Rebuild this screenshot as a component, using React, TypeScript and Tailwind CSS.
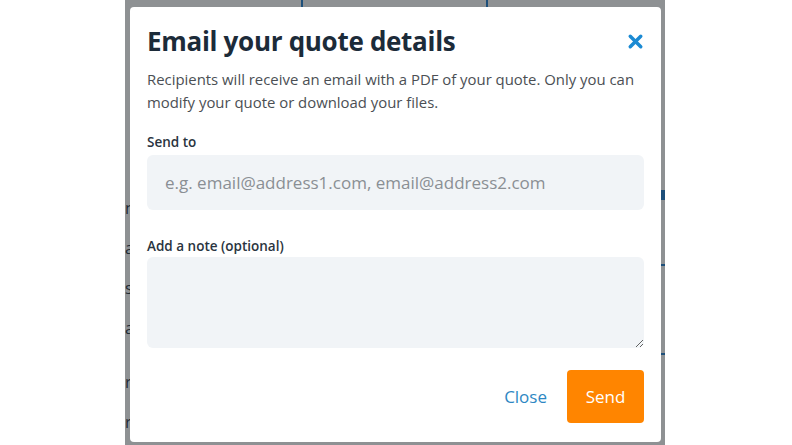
import { X } from 'lucide-react';

export default function App() {
  return (
    <div
      className="relative w-[792px] h-[445px] bg-white overflow-hidden"
      style={{ fontFamily: '"Open Sans", "Noto Sans", sans-serif' }}
    >
      {/* Dimmed page behind the dialog */}
      <div className="absolute left-[125px] top-0 w-[540px] h-[445px] bg-[#8e9193]">
        <div className="absolute left-[176px] top-0 w-[2px] h-[7px] bg-[#1d4f7a]" />
        <div className="absolute left-[361px] top-0 w-[2px] h-[7px] bg-[#1d4f7a]" />
        <div className="absolute left-[0px] top-[198px] flex flex-col gap-[20px] text-[16px] leading-[20px] text-[#1f2a33]">
          <span>n</span>
          <span>a</span>
          <span>s</span>
          <span>a</span>
          <span className="mt-[14px]">r</span>
          <span>r</span>
        </div>
        <div className="absolute left-[536px] top-[190px] w-[4px] h-[10px] bg-[#1d4f7a]" />
        <div className="absolute left-[536px] top-[264px] w-[4px] h-[2px] bg-[#1d4f7a]" />
        <div className="absolute left-[536px] top-[353px] w-[4px] h-[2px] bg-[#1d4f7a]" />
      </div>

      {/* Dialog */}
      <div className="absolute left-[130px] top-[7px] w-[531px] h-[435px] bg-white rounded-[4px] px-[17px] pt-[16px] flex flex-col">
        <div className="flex items-start justify-between">
          <h2 className="text-[26px] leading-[36px] font-bold text-[#1c2b39] tracking-[-0.3px]">
            Email your quote details
          </h2>
          <button className="mt-[8px] mr-[-2px] text-[#1b8ad3]">
            <X className="w-[21px] h-[21px]" strokeWidth={4} />
          </button>
        </div>
        <p className="mt-[9px] text-[14.9px] leading-[23px] text-[#4b4f54]">
          Recipients will receive an email with a PDF of your quote. Only you can modify your quote or download your files.
        </p>

        <label className="mt-[18px] text-[13.5px] leading-[20px] font-semibold text-[#2a3440]">Send to</label>
        <input
          type="text"
          placeholder="e.g. email@address1.com, email@address2.com"
          className="mt-[3px] h-[55px] w-full rounded-[6px] bg-[#f1f4f7] px-[18px] text-[17px] text-[#333] placeholder-[#8a8f94] outline-none"
        />

        <label className="mt-[26px] text-[13.5px] leading-[20px] font-semibold text-[#2a3440]">Add a note (optional)</label>
        <textarea className="mt-[1px] h-[91px] w-full rounded-[6px] bg-[#f1f4f7] px-[18px] py-[12px] text-[16px] outline-none resize-y" />

        <div className="mt-[22px] flex items-center justify-end gap-[20px]">
          <button className="text-[17px] text-[#2d87c3]">Close</button>
          <button className="w-[77px] h-[53px] rounded-[4px] bg-[#ff8500] text-white text-[17px]">Send</button>
        </div>
      </div>
    </div>
  );
}
